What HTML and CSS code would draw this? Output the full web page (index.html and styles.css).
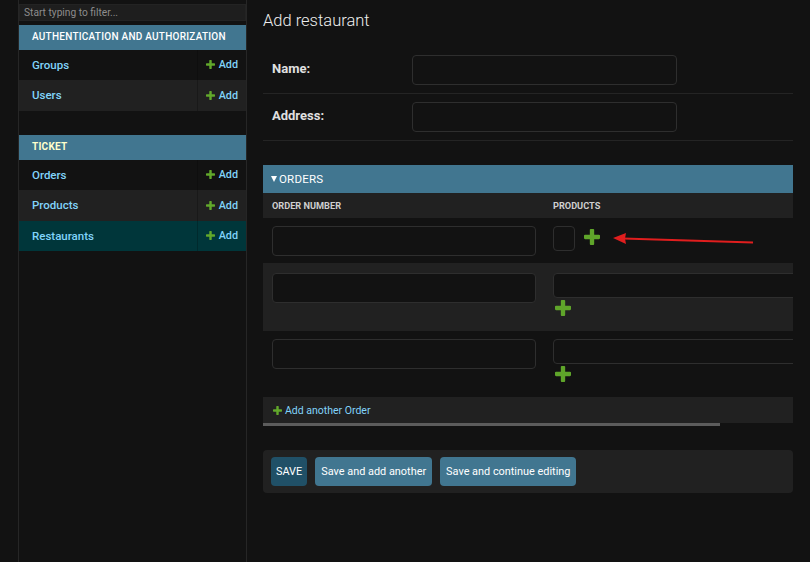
FILE: index.html
```html
<!DOCTYPE html>
<html lang="en">
<head>
<meta charset="utf-8">
<title>Add restaurant</title>
<link rel="stylesheet" href="styles.css">
</head>
<body>
<div class="page">
  <div class="toggle"></div>
  <nav class="sidebar">
    <input class="filter" type="text" placeholder="Start typing to filter...">
    <div class="module">
      <div class="caption">Authentication and Authorization</div>
      <div class="nav-row"><a class="model">Groups</a><a class="add"><svg viewBox="192 192 1408 1408"><path d="M1600 796v192q0 40-28 68t-68 28h-416v416q0 40-28 68t-68 28h-192q-40 0-68-28t-28-68v-416h-416q-40 0-68-28t-28-68v-192q0-40 28-68t68-28h416v-416q0-40 28-68t68-28h192q40 0 68 28t28 68v416h416q40 0 68 28t28 68z"/></svg>Add</a></div>
      <div class="nav-row alt"><a class="model">Users</a><a class="add"><svg viewBox="192 192 1408 1408"><path d="M1600 796v192q0 40-28 68t-68 28h-416v416q0 40-28 68t-68 28h-192q-40 0-68-28t-28-68v-416h-416q-40 0-68-28t-28-68v-192q0-40 28-68t68-28h416v-416q0-40 28-68t68-28h192q40 0 68 28t28 68v416h416q40 0 68 28t28 68z"/></svg>Add</a></div>
    </div>
    <div class="module">
      <div class="caption current">Ticket</div>
      <div class="nav-row"><a class="model">Orders</a><a class="add"><svg viewBox="192 192 1408 1408"><path d="M1600 796v192q0 40-28 68t-68 28h-416v416q0 40-28 68t-68 28h-192q-40 0-68-28t-28-68v-416h-416q-40 0-68-28t-28-68v-192q0-40 28-68t68-28h416v-416q0-40 28-68t68-28h192q40 0 68 28t28 68v416h416q40 0 68 28t28 68z"/></svg>Add</a></div>
      <div class="nav-row alt"><a class="model">Products</a><a class="add"><svg viewBox="192 192 1408 1408"><path d="M1600 796v192q0 40-28 68t-68 28h-416v416q0 40-28 68t-68 28h-192q-40 0-68-28t-28-68v-416h-416q-40 0-68-28t-28-68v-192q0-40 28-68t68-28h416v-416q0-40 28-68t68-28h192q40 0 68 28t28 68v416h416q40 0 68 28t28 68z"/></svg>Add</a></div>
      <div class="nav-row selected"><a class="model">Restaurants</a><a class="add"><svg viewBox="192 192 1408 1408"><path d="M1600 796v192q0 40-28 68t-68 28h-416v416q0 40-28 68t-68 28h-192q-40 0-68-28t-28-68v-416h-416q-40 0-68-28t-28-68v-192q0-40 28-68t68-28h416v-416q0-40 28-68t68-28h192q40 0 68 28t28 68v416h416q40 0 68 28t28 68z"/></svg>Add</a></div>
    </div>
  </nav>

  <main class="content">
    <h1>Add restaurant</h1>
    <div class="fieldset">
      <div class="form-row"><label>Name:</label><input class="text-input" type="text"></div>
      <div class="form-row"><label>Address:</label><input class="text-input" type="text"></div>
    </div>

    <div class="inline-group">
      <div class="inline-title"><span class="tri"></span>Orders</div>
      <div class="scroll">
        <div class="tabular">
          <div class="trow head"><div class="th">Order number</div><div class="th c2">Products</div></div>
          <div class="trow r1">
            <div class="cell"><input class="order-input" type="text"></div>
            <div class="cell c2 prod-wrap"><span class="prod-empty"></span><svg class="plus" viewBox="192 192 1408 1408"><path d="M1600 796v192q0 40-28 68t-68 28h-416v416q0 40-28 68t-68 28h-192q-40 0-68-28t-28-68v-416h-416q-40 0-68-28t-28-68v-192q0-40 28-68t68-28h416v-416q0-40 28-68t68-28h192q40 0 68 28t28 68v416h416q40 0 68 28t28 68z"/></svg></div>
          </div>
          <div class="trow r2">
            <div class="cell"><input class="order-input" type="text"></div>
            <div class="cell c2"><input class="prod-input" type="text"><svg class="plus below" viewBox="192 192 1408 1408"><path d="M1600 796v192q0 40-28 68t-68 28h-416v416q0 40-28 68t-68 28h-192q-40 0-68-28t-28-68v-416h-416q-40 0-68-28t-28-68v-192q0-40 28-68t68-28h416v-416q0-40 28-68t68-28h192q40 0 68 28t28 68v416h416q40 0 68 28t28 68z"/></svg></div>
          </div>
          <div class="trow r3">
            <div class="cell"><input class="order-input" type="text"></div>
            <div class="cell c2"><input class="prod-input" type="text"><svg class="plus below" viewBox="192 192 1408 1408"><path d="M1600 796v192q0 40-28 68t-68 28h-416v416q0 40-28 68t-68 28h-192q-40 0-68-28t-28-68v-416h-416q-40 0-68-28t-28-68v-192q0-40 28-68t68-28h416v-416q0-40 28-68t68-28h192q40 0 68 28t28 68v416h416q40 0 68 28t28 68z"/></svg></div>
          </div>
          <div class="add-row"><svg viewBox="192 192 1408 1408"><path d="M1600 796v192q0 40-28 68t-68 28h-416v416q0 40-28 68t-68 28h-192q-40 0-68-28t-28-68v-416h-416q-40 0-68-28t-28-68v-192q0-40 28-68t68-28h416v-416q0-40 28-68t68-28h192q40 0 68 28t28 68v416h416q40 0 68 28t28 68z"/></svg><a>Add another Order</a></div>
        </div>
      </div>
      <div class="hscroll"><div class="thumb"></div></div>
    </div>

    <div class="submit-row">
      <button class="btn btn-default">SAVE</button>
      <button class="btn">Save and add another</button>
      <button class="btn">Save and continue editing</button>
    </div>
  </main>

  <svg class="annot" viewBox="0 0 148 20" width="148" height="20">
    <line x1="13" y1="10.5" x2="143" y2="14.5" stroke="#e01e1e" stroke-width="2"/>
    <polygon points="3,10 16,5 15,10.5 16,16" fill="#e01e1e"/>
  </svg>
</div>
</body>
</html>
```

FILE: styles.css
```css
html, body {
  margin: 0;
  padding: 0;
}

body {
  background: #121212;
  color: #eeeeee;
  font-family: Roboto, "Liberation Sans", sans-serif;
}

.page {
  position: relative;
  display: flex;
  min-height: 562px;
}

.toggle {
  flex: none;
  width: 18px;
  border-right: 1px solid #262626;
}

.sidebar {
  flex: none;
  width: 227px;
  padding-top: 4px;
  border-right: 1px solid #262626;
}

.filter {
  display: block;
  box-sizing: border-box;
  width: 227px;
  height: 17px;
  margin: 0 0 4px;
  padding: 0 4px;
  background: #1e1e1e;
  border: 1px solid #232323;
  color: #cccccc;
  font-family: Roboto, "Liberation Sans", sans-serif;
  font-size: 10.2px;
  outline: none;
}

.filter::placeholder {
  color: #8d8d8d;
}

.module {
  margin-bottom: 24.5px;
}

.caption {
  height: 24.5px;
  line-height: 24.5px;
  padding-left: 13px;
  background: #417690;
  color: #ffffff;
  font-size: 10px;
  font-weight: 500;
  letter-spacing: 0.25px;
  text-transform: uppercase;
}

.caption.current {
  color: #ffffcc;
  font-weight: 700;
}

.nav-row {
  display: grid;
  grid-template-columns: 1fr 49px;
  align-items: center;
  height: 30.5px;
  background: #121212;
}

.nav-row.alt {
  background: #212121;
}

.nav-row.selected {
  background: #00363a;
}

.model {
  padding-left: 13px;
  color: #81d4fa;
  font-size: 11.5px;
  font-weight: 500;
}

.add {
  display: flex;
  align-items: center;
  justify-content: flex-end;
  gap: 4px;
  height: 100%;
  padding-right: 8px;
  border-left: 1px solid rgba(0, 0, 0, 0.22);
  color: #81d4fa;
  font-size: 10.8px;
  font-weight: 500;
}

.add svg {
  width: 9px;
  height: 9px;
  fill: #62a82b;
}

/* main */
.content {
  flex: 1;
  min-width: 0;
  padding: 11px 17px 0 16px;
}

h1 {
  margin: 0 0 16px;
  font-size: 16.5px;
  font-weight: 300;
  line-height: 20px;
  color: #eeeeee;
}

.form-row {
  display: flex;
  align-items: flex-start;
  padding: 8px 9px;
  border-bottom: 1px solid #242424;
}

.form-row label {
  flex: none;
  width: 140px;
  padding-top: 6px;
  line-height: 16px;
  font-size: 13px;
  font-weight: 700;
  color: #e0e0e0;
}

.text-input,
.order-input,
.prod-input {
  display: block;
  box-sizing: border-box;
  margin: 0;
  background: #121212;
  border: 1px solid #2e2e2e;
  border-radius: 4px;
  outline: none;
}

.text-input {
  width: 265px;
  height: 30px;
}

.inline-group {
  margin-top: 24px;
}

.inline-title {
  display: flex;
  align-items: center;
  gap: 2px;
  height: 28px;
  padding-left: 8px;
  background: #417690;
  color: #ffffff;
  font-size: 11.5px;
  letter-spacing: 0.2px;
  text-transform: uppercase;
}

.tri {
  width: 0;
  height: 0;
  border-left: 3.5px solid transparent;
  border-right: 3.5px solid transparent;
  border-top: 6px solid #ffffff;
}

.scroll {
  overflow: hidden;
}

.tabular {
  width: 615px;
}

.trow {
  display: grid;
  grid-template-columns: 282px 333px;
}

.trow.head {
  height: 25px;
  align-items: center;
  background: #212121;
}

.th {
  padding: 0 9px;
  font-size: 9.2px;
  font-weight: 700;
  color: #cfcfcf;
  text-transform: uppercase;
}

.th.c2 {
  padding-left: 8px;
}

.cell {
  padding: 8px 9px 7px;
}

.cell.c2 {
  padding-left: 8px;
}

.r2 {
  background: #212121;
}

.r2 .cell {
  padding-top: 10px;
  padding-bottom: 15px;
}

.r3 .cell {
  padding-bottom: 15px;
}

.order-input {
  width: 264px;
  height: 30px;
}

.prod-input {
  width: 265px;
  height: 25px;
}

.prod-wrap {
  display: flex;
  align-items: flex-start;
  gap: 9px;
}

.prod-empty {
  display: block;
  box-sizing: border-box;
  width: 22px;
  height: 25px;
  border: 1px solid #2e2e2e;
  border-radius: 4px;
}

.plus {
  display: block;
  width: 16px;
  height: 16px;
  fill: #5fa52a;
}

.prod-wrap .plus {
  margin-top: 3px;
}

.plus.below {
  margin: 2px 0 0 2px;
}

.add-row {
  display: flex;
  align-items: center;
  gap: 3px;
  height: 26px;
  padding-left: 10px;
  background: #212121;
  color: #81d4fa;
  font-size: 10.5px;
}

.add-row a {
  padding-top: 1px;
}

.add-row svg {
  width: 9px;
  height: 9px;
  fill: #62a82b;
}

.hscroll {
  height: 3px;
}

.thumb {
  width: 457px;
  height: 3px;
  background: #5c5c5c;
}

.submit-row {
  display: flex;
  gap: 8px;
  margin-top: 24px;
  padding: 7px 8px;
  background: #212121;
  border-radius: 4px;
}

.btn {
  height: 29px;
  padding: 0 6px;
  border: 0;
  border-radius: 4px;
  background: #417690;
  color: #ffffff;
  font-family: Roboto, "Liberation Sans", sans-serif;
  font-size: 10.9px;
}

.btn-default {
  padding: 0 5px;
  background: #205067;
}

.annot {
  position: absolute;
  left: 610px;
  top: 228px;
}
```
